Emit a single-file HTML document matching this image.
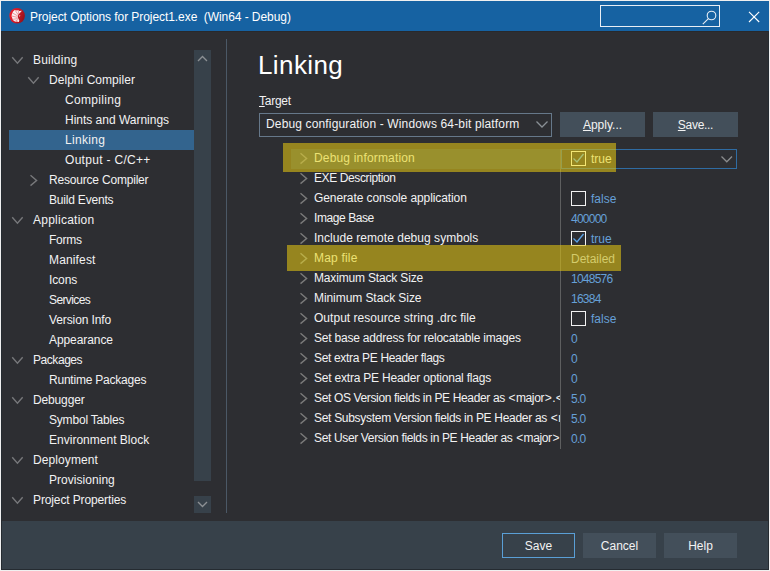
<!DOCTYPE html>
<html><head><meta charset="utf-8"><style>
html,body{margin:0;padding:0;width:770px;height:571px;overflow:hidden;background:#f0f0f0;}
*{box-sizing:border-box;}
body{font-family:"Liberation Sans",sans-serif;font-size:12px;color:#f2f2f2;position:relative;}
.a{position:absolute;}
.t{position:absolute;white-space:pre;line-height:20px;height:20px;}
svg{position:absolute;overflow:visible;}
</style></head><body>
<div class="a" style="left:1px;top:1px;width:768px;height:569px;background:#2d2e32;border:1px solid #252b31;border-top:0;"></div>
<div class="a" style="left:1px;top:1px;width:768px;height:30px;background:#1662a2;"></div>

<svg style="left:0;top:0" width="32" height="32">
<defs><linearGradient id="rg" x1="0" y1="0" x2="1" y2="0.4"><stop offset="0" stop-color="#f0202c"/><stop offset="0.55" stop-color="#d21a26"/><stop offset="1" stop-color="#9c121c"/></linearGradient></defs>
<circle cx="17.1" cy="15.8" r="7.8" fill="url(#rg)"/>
<path d="M14.6 10.1 L17 10.6 L18.4 10.1 L19.2 10.9 L21.9 10.7 L19.9 13.1 L18.4 14.6 L17.8 16.6 L18.3 18.6 L19.3 20.3 L18.9 22.1 L16.6 21.5 L15.4 22.1 L14.2 21 L12.8 20.1 L12.3 18.3 L11.5 16.2 L11.9 13.9 L12.9 11.8 Z" fill="#fbf0f0"/>
<g stroke="#d81c28" stroke-width="0.55" fill="none" opacity="0.75">
<path d="M17.8 16 L12.2 12.8"/><path d="M17.6 17.4 L11.6 16"/><path d="M17.8 18.6 L12.4 19.4"/><path d="M18.2 19.4 L14.6 21.8"/><path d="M18.4 15 L15.2 10.4"/><path d="M18.9 14 L18.2 10.2"/>
</g>
<path d="M19.2 15.2 L20.4 15.6 L19.6 17 Z" fill="#fbf0f0"/>
</svg>
<div class="t" style="left:30px;top:7px;color:#ffffff;letter-spacing:-0.067px;">Project Options for Project1.exe  (Win64 - Debug)</div>
<div class="a" style="left:600px;top:5px;width:120px;height:22px;border:1px solid #e8eef5;"></div>
<svg style="left:0;top:0" width="770" height="32">
<circle cx="711.5" cy="15.5" r="4.3" fill="none" stroke="#e8eef5" stroke-width="1.1"/>
<path d="M708.4 18.6 L702.8 24.2" stroke="#e8eef5" stroke-width="1.1"/>
<path d="M749 11.8 L759.2 22 M759.2 11.8 L749 22" stroke="#ffffff" stroke-width="1.1"/>
</svg>
<div class="a" style="left:1px;top:31px;width:767px;height:1px;background:#28292c;"></div>
<div class="t" style="left:33px;top:50px;letter-spacing:0.214px;">Building</div>
<svg style="left:12px;top:57px" width="12" height="8"><path d="M0.25 0.3 L5.45 6.2 L10.65 0.3" fill="none" stroke="#77787b" stroke-width="1.4"/></svg>
<div class="t" style="left:49px;top:70px;letter-spacing:0.043px;">Delphi Compiler</div>
<svg style="left:28px;top:77px" width="12" height="8"><path d="M0.25 0.3 L5.45 6.2 L10.65 0.3" fill="none" stroke="#77787b" stroke-width="1.4"/></svg>
<div class="t" style="left:65px;top:90px;letter-spacing:0.325px;">Compiling</div>
<div class="t" style="left:65px;top:110px;letter-spacing:-0.012px;">Hints and Warnings</div>
<div class="a" style="left:9px;top:130px;width:185px;height:20px;background:#33648e;"></div>
<div class="t" style="left:65px;top:130px;letter-spacing:0.317px;">Linking</div>
<div class="t" style="left:65px;top:150px;letter-spacing:0.308px;">Output - C/C++</div>
<div class="t" style="left:49px;top:170px;letter-spacing:-0.194px;">Resource Compiler</div>
<svg style="left:30px;top:174px" width="8" height="13"><path d="M0.5 1.25 L6.6 6.45 L0.5 11.65" fill="none" stroke="#77787b" stroke-width="1.4"/></svg>
<div class="t" style="left:49px;top:190px;letter-spacing:-0.191px;">Build Events</div>
<div class="t" style="left:33px;top:210px;letter-spacing:0.25px;">Application</div>
<svg style="left:12px;top:217px" width="12" height="8"><path d="M0.25 0.3 L5.45 6.2 L10.65 0.3" fill="none" stroke="#77787b" stroke-width="1.4"/></svg>
<div class="t" style="left:49px;top:230px;letter-spacing:-0.275px;">Forms</div>
<div class="t" style="left:49px;top:250px;letter-spacing:0.143px;">Manifest</div>
<div class="t" style="left:49px;top:270px;letter-spacing:-0.125px;">Icons</div>
<div class="t" style="left:49px;top:290px;letter-spacing:-0.6px;">Services</div>
<div class="t" style="left:49px;top:310px;letter-spacing:-0.109px;">Version Info</div>
<div class="t" style="left:49px;top:330px;letter-spacing:-0.078px;">Appearance</div>
<div class="t" style="left:33px;top:350px;letter-spacing:-0.443px;">Packages</div>
<svg style="left:12px;top:357px" width="12" height="8"><path d="M0.25 0.3 L5.45 6.2 L10.65 0.3" fill="none" stroke="#77787b" stroke-width="1.4"/></svg>
<div class="t" style="left:49px;top:370px;letter-spacing:-0.22px;">Runtime Packages</div>
<div class="t" style="left:33px;top:390px;letter-spacing:-0.143px;">Debugger</div>
<svg style="left:12px;top:397px" width="12" height="8"><path d="M0.25 0.3 L5.45 6.2 L10.65 0.3" fill="none" stroke="#77787b" stroke-width="1.4"/></svg>
<div class="t" style="left:49px;top:410px;letter-spacing:-0.192px;">Symbol Tables</div>
<div class="t" style="left:49px;top:430px;letter-spacing:0.013px;">Environment Block</div>
<div class="t" style="left:33px;top:450px;letter-spacing:0.1px;">Deployment</div>
<svg style="left:12px;top:457px" width="12" height="8"><path d="M0.25 0.3 L5.45 6.2 L10.65 0.3" fill="none" stroke="#77787b" stroke-width="1.4"/></svg>
<div class="t" style="left:49px;top:470px;letter-spacing:0.036px;">Provisioning</div>
<div class="t" style="left:33px;top:490px;letter-spacing:-0.124px;">Project Properties</div>
<svg style="left:12px;top:497px" width="12" height="8"><path d="M0.25 0.3 L5.45 6.2 L10.65 0.3" fill="none" stroke="#77787b" stroke-width="1.4"/></svg>
<div class="a" style="left:194px;top:50px;width:17px;height:431px;background:#37414a;"></div>
<div class="a" style="left:194px;top:496px;width:17px;height:17px;background:#37414a;"></div>
<svg style="left:197px;top:55px" width="12" height="8"><path d="M1 6 L5.5 1.5 L10 6" fill="none" stroke="#8c9094" stroke-width="1.35"/></svg>
<svg style="left:197px;top:501px" width="12" height="8"><path d="M1 1 L5.5 5.5 L10 1" fill="none" stroke="#8c9094" stroke-width="1.35"/></svg>
<div class="a" style="left:226px;top:39px;width:1px;height:474px;background:#4b5866;"></div>
<div class="a" style="left:258px;top:48px;font-size:26px;letter-spacing:0.4px;line-height:34px;white-space:pre;color:#ffffff;">Linking</div>
<div class="t" style="left:259px;top:91px;letter-spacing:-0.25px;"><span style="text-decoration:underline;">T</span>arget</div>
<div class="a" style="left:259px;top:113px;width:293px;height:24px;border:1px solid #66788a;"></div>
<div class="t" style="left:266px;top:114px;letter-spacing:0.148px;">Debug configuration - Windows 64-bit platform</div>
<svg style="left:536px;top:121px" width="14" height="8"><path d="M0.5 0.5 L6 6 L11.5 0.5" fill="none" stroke="#8a9096" stroke-width="1.3"/></svg>
<div class="a" style="left:560px;top:112px;width:85px;height:25px;background:#434f5a;"></div>
<div class="t" style="left:560px;top:115px;width:85px;text-align:center;"><span style="text-decoration:underline">A</span>pply...</div>
<div class="a" style="left:653px;top:112px;width:85px;height:25px;background:#434f5a;"></div>
<div class="t" style="left:653px;top:115px;width:85px;text-align:center;letter-spacing:-0.3px;"><span style="text-decoration:underline">S</span>ave...</div>
<div class="a" style="left:291px;top:149px;width:269px;height:20px;background:#364a56;"></div>
<div class="a" style="left:560px;top:149px;width:1px;height:300px;background:#5e5f60;"></div>
<div class="a" style="left:561px;top:149px;width:176px;height:20px;border:1px solid #2f6ca3;"></div>
<svg style="left:721px;top:156px" width="14" height="8"><path d="M0.5 0.5 L5.8 5.8 L11 0.5" fill="none" stroke="#8a8c8e" stroke-width="1.3"/></svg>
<svg style="left:300px;top:173px" width="8" height="13"><path d="M0.5 0.3 L6.6 5.45 L0.5 10.6" fill="none" stroke="#7a7a7a" stroke-width="1.4"/></svg>
<div class="t" style="left:314px;top:168px;width:246px;overflow:hidden;color:#f2f2f2;letter-spacing:-0.393px;">EXE Description</div>
<svg style="left:300px;top:193px" width="8" height="13"><path d="M0.5 0.3 L6.6 5.45 L0.5 10.6" fill="none" stroke="#7a7a7a" stroke-width="1.4"/></svg>
<div class="t" style="left:314px;top:188px;width:246px;overflow:hidden;color:#f2f2f2;letter-spacing:-0.096px;">Generate console application</div>
<div class="a" style="left:571px;top:191px;width:15px;height:15px;border:1px solid #f2f2f2;"></div>
<div class="t" style="left:591px;top:189px;color:#66a0d8;">false</div>
<svg style="left:300px;top:213px" width="8" height="13"><path d="M0.5 0.3 L6.6 5.45 L0.5 10.6" fill="none" stroke="#7a7a7a" stroke-width="1.4"/></svg>
<div class="t" style="left:314px;top:208px;width:246px;overflow:hidden;color:#f2f2f2;letter-spacing:-0.422px;">Image Base</div>
<div class="t" style="left:571px;top:209px;color:#66a0d8;letter-spacing:-0.75px;">400000</div>
<svg style="left:300px;top:233px" width="8" height="13"><path d="M0.5 0.3 L6.6 5.45 L0.5 10.6" fill="none" stroke="#7a7a7a" stroke-width="1.4"/></svg>
<div class="t" style="left:314px;top:228px;width:246px;overflow:hidden;color:#f2f2f2;letter-spacing:0.033px;">Include remote debug symbols</div>
<div class="a" style="left:571px;top:231px;width:15px;height:15px;border:1px solid #f2f2f2;"></div>
<svg style="left:571px;top:231px" width="15" height="15"><path d="M2.5 7.5 L6 11 L12.5 3" fill="none" stroke="#5aa2e6" stroke-width="1.3"/></svg>
<div class="t" style="left:591px;top:229px;color:#66a0d8;">true</div>
<svg style="left:300px;top:273px" width="8" height="13"><path d="M0.5 0.3 L6.6 5.45 L0.5 10.6" fill="none" stroke="#7a7a7a" stroke-width="1.4"/></svg>
<div class="t" style="left:314px;top:268px;width:246px;overflow:hidden;color:#f2f2f2;letter-spacing:-0.165px;">Maximum Stack Size</div>
<div class="t" style="left:571px;top:269px;color:#66a0d8;letter-spacing:-0.75px;">1048576</div>
<svg style="left:300px;top:293px" width="8" height="13"><path d="M0.5 0.3 L6.6 5.45 L0.5 10.6" fill="none" stroke="#7a7a7a" stroke-width="1.4"/></svg>
<div class="t" style="left:314px;top:288px;width:246px;overflow:hidden;color:#f2f2f2;letter-spacing:-0.071px;">Minimum Stack Size</div>
<div class="t" style="left:571px;top:289px;color:#66a0d8;letter-spacing:-0.75px;">16384</div>
<svg style="left:300px;top:313px" width="8" height="13"><path d="M0.5 0.3 L6.6 5.45 L0.5 10.6" fill="none" stroke="#7a7a7a" stroke-width="1.4"/></svg>
<div class="t" style="left:314px;top:308px;width:246px;overflow:hidden;color:#f2f2f2;letter-spacing:0.029px;">Output resource string .drc file</div>
<div class="a" style="left:571px;top:311px;width:15px;height:15px;border:1px solid #f2f2f2;"></div>
<div class="t" style="left:591px;top:309px;color:#66a0d8;">false</div>
<svg style="left:300px;top:333px" width="8" height="13"><path d="M0.5 0.3 L6.6 5.45 L0.5 10.6" fill="none" stroke="#7a7a7a" stroke-width="1.4"/></svg>
<div class="t" style="left:314px;top:328px;width:246px;overflow:hidden;color:#f2f2f2;letter-spacing:-0.208px;">Set base address for relocatable images</div>
<div class="t" style="left:571px;top:329px;color:#66a0d8;letter-spacing:-0.75px;">0</div>
<svg style="left:300px;top:353px" width="8" height="13"><path d="M0.5 0.3 L6.6 5.45 L0.5 10.6" fill="none" stroke="#7a7a7a" stroke-width="1.4"/></svg>
<div class="t" style="left:314px;top:348px;width:246px;overflow:hidden;color:#f2f2f2;letter-spacing:-0.329px;">Set extra PE Header flags</div>
<div class="t" style="left:571px;top:349px;color:#66a0d8;letter-spacing:-0.75px;">0</div>
<svg style="left:300px;top:373px" width="8" height="13"><path d="M0.5 0.3 L6.6 5.45 L0.5 10.6" fill="none" stroke="#7a7a7a" stroke-width="1.4"/></svg>
<div class="t" style="left:314px;top:368px;width:246px;overflow:hidden;color:#f2f2f2;letter-spacing:-0.209px;">Set extra PE Header optional flags</div>
<div class="t" style="left:571px;top:369px;color:#66a0d8;letter-spacing:-0.75px;">0</div>
<svg style="left:300px;top:393px" width="8" height="13"><path d="M0.5 0.3 L6.6 5.45 L0.5 10.6" fill="none" stroke="#7a7a7a" stroke-width="1.4"/></svg>
<div class="t" style="left:314px;top:388px;width:246px;overflow:hidden;color:#f2f2f2;letter-spacing:-0.358px;">Set OS Version fields in PE Header as <span style="margin:0 0.7px">&lt;</span>major<span style="margin:0 0.7px">&gt;</span>.<span style="margin:0 0.7px">&lt;</span>minor&gt;</div>
<div class="t" style="left:571px;top:389px;color:#66a0d8;letter-spacing:-0.75px;">5.0</div>
<svg style="left:300px;top:413px" width="8" height="13"><path d="M0.5 0.3 L6.6 5.45 L0.5 10.6" fill="none" stroke="#7a7a7a" stroke-width="1.4"/></svg>
<div class="t" style="left:314px;top:408px;width:246px;overflow:hidden;color:#f2f2f2;letter-spacing:-0.298px;">Set Subsystem Version fields in PE Header as <span style="margin:0 0.7px">&lt;</span>major<span style="margin:0 0.7px">&gt;</span>.&lt;minor&gt;</div>
<div class="t" style="left:571px;top:409px;color:#66a0d8;letter-spacing:-0.75px;">5.0</div>
<svg style="left:300px;top:433px" width="8" height="13"><path d="M0.5 0.3 L6.6 5.45 L0.5 10.6" fill="none" stroke="#7a7a7a" stroke-width="1.4"/></svg>
<div class="t" style="left:314px;top:428px;width:246px;overflow:hidden;color:#f2f2f2;letter-spacing:-0.35px;">Set User Version fields in PE Header as <span style="margin:0 0.7px">&lt;</span>major<span style="margin:0 0.7px">&gt;</span>.&lt;minor&gt;</div>
<div class="t" style="left:571px;top:429px;color:#66a0d8;letter-spacing:-0.75px;">0.0</div>
<div class="a" style="left:283px;top:143px;width:333px;height:29px;background:rgba(220,192,18,0.6);"></div>
<div class="a" style="left:287px;top:245px;width:334px;height:26px;background:rgba(220,192,18,0.6);"></div>
<svg style="left:300px;top:153px" width="8" height="13"><path d="M0.5 0.3 L6.6 5.45 L0.5 10.6" fill="none" stroke="#b8ad4a" stroke-width="1.4"/></svg>
<div class="t" style="left:314px;top:148px;width:246px;overflow:hidden;color:#ece274;letter-spacing:0.169px;">Debug information</div>
<div class="a" style="left:571px;top:151px;width:15px;height:15px;border:1px solid #f4e674;"></div>
<svg style="left:571px;top:151px" width="15" height="15"><path d="M2.5 7.5 L6 11 L12.5 3" fill="none" stroke="#a8bf74" stroke-width="1.3"/></svg>
<div class="t" style="left:591px;top:149px;color:#ece274;">true</div>
<svg style="left:300px;top:253px" width="8" height="13"><path d="M0.5 0.3 L6.6 5.45 L0.5 10.6" fill="none" stroke="#b8ad4a" stroke-width="1.4"/></svg>
<div class="t" style="left:314px;top:248px;width:246px;overflow:hidden;color:#ece274;letter-spacing:0.186px;">Map file</div>
<div class="t" style="left:571px;top:249px;color:#d4cc6c;">Detailed</div>
<div class="a" style="left:2px;top:521px;width:766px;height:48px;background:#37414a;"></div>
<div class="a" style="left:502px;top:533px;width:73px;height:25px;border:1px solid #5a9fd6;"></div>
<div class="t" style="left:502px;top:536px;width:73px;text-align:center;">Save</div>
<div class="a" style="left:583px;top:533px;width:73px;height:25px;background:#434f5a;"></div>
<div class="t" style="left:583px;top:536px;width:73px;text-align:center;">Cancel</div>
<div class="a" style="left:664px;top:533px;width:73px;height:25px;background:#434f5a;"></div>
<div class="t" style="left:664px;top:536px;width:73px;text-align:center;">Help</div>
</body></html>
